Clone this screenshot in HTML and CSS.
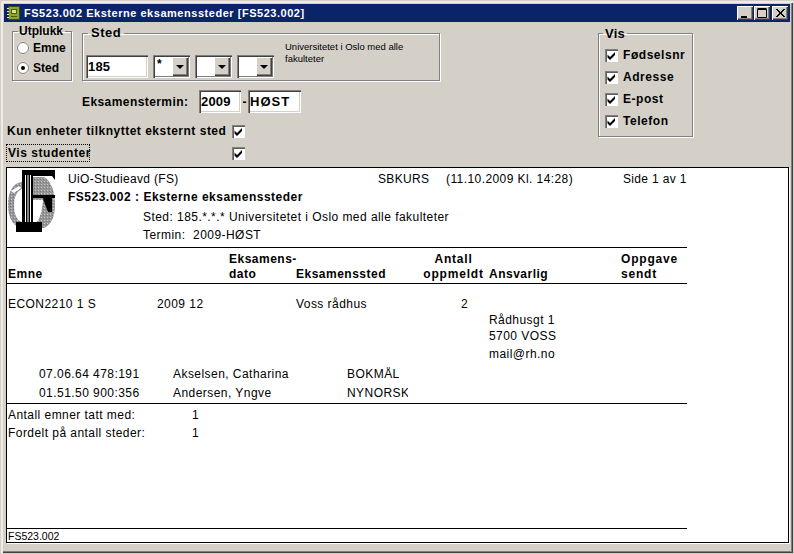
FILE: index.html
```html
<!DOCTYPE html>
<html lang="no">
<head>
<meta charset="utf-8">
<title>FS523.002</title>
<link rel="stylesheet" href="styles.css">
</head>
<body>
<div class="window">
  <header class="titlebar">
    <svg class="appicon" width="13" height="14" viewBox="0 0 13 14">
      <rect x="1.5" y="0.5" width="11" height="13" fill="#8aa530" stroke="#3c4a10"/>
      <rect x="4.5" y="3.5" width="5" height="4" fill="#dfe27a" stroke="#4c5a18"/>
      <path d="M4 10.5h6" stroke="#4c5a18"/>
      <path d="M0 2.5h2M0 5.5h2M0 8.5h2M0 11.5h2" stroke="#e8e8d8"/>
    </svg>
    <span class="titletext">FS523.002 Eksterne eksamenssteder [FS523.002]</span>
    <div class="wincontrols">
      <span class="winbtn"><svg width="14" height="12" viewBox="0 0 14 12"><path d="M3 10h6" stroke="#000" stroke-width="2"/></svg></span>
      <span class="winbtn"><svg width="14" height="12" viewBox="0 0 14 12"><path d="M2.5 2.5h9v8h-9z M2.5 1.5h9" fill="none" stroke="#000"/></svg></span>
      <span class="winbtn close"><svg width="14" height="12" viewBox="0 0 14 12"><path d="M3 2l8 8M4 2l8 8M11 2l-8 8M12 2l-8 8" stroke="#000" fill="none"/></svg></span>
    </div>
  </header>

  <section class="form">
    <div class="form-left">
      <div class="groups">
        <fieldset class="group utplukk">
          <legend>Utplukk</legend>
          <label class="radio-row"><span class="radio"></span>Emne</label>
          <label class="radio-row"><span class="radio on"></span>Sted</label>
        </fieldset>
        <fieldset class="group sted">
          <legend>Sted</legend>
          <div class="sted-row">
            <span class="input w62">185</span>
            <span class="combo"><span class="combo-val">*</span><span class="arrow"></span></span>
            <span class="combo"><span class="combo-val"></span><span class="arrow"></span></span>
            <span class="combo"><span class="combo-val"></span><span class="arrow"></span></span>
            <span class="sted-name">Universitetet i Oslo med alle fakulteter</span>
          </div>
        </fieldset>
      </div>
      <div class="termin">
        <span class="termin-label">Eksamenstermin:</span>
        <span class="input w42">2009</span>
        <span class="dash">-</span>
        <span class="input w53">HØST</span>
      </div>
      <div class="opt-row first">
        <span class="opt-label">Kun enheter tilknyttet eksternt sted</span>
        <span class="check flat"><svg width="11" height="11" viewBox="0 0 11 11"><use href="#tick"/></svg></span>
      </div>
      <div class="opt-row">
        <span class="opt-label focus">Vis studenter</span>
        <span class="check flat"><svg width="11" height="11" viewBox="0 0 11 11"><use href="#tick"/></svg></span>
      </div>
    </div>
    <fieldset class="group vis">
      <legend>Vis</legend>
      <label class="vis-row"><span class="check"><svg width="11" height="11" viewBox="0 0 11 11"><use href="#tick"/></svg></span>Fødselsnr</label>
      <label class="vis-row"><span class="check"><svg width="11" height="11" viewBox="0 0 11 11"><use href="#tick"/></svg></span>Adresse</label>
      <label class="vis-row"><span class="check"><svg width="11" height="11" viewBox="0 0 11 11"><use href="#tick"/></svg></span>E-post</label>
      <label class="vis-row"><span class="check"><svg width="11" height="11" viewBox="0 0 11 11"><use href="#tick"/></svg></span>Telefon</label>
    </fieldset>
  </section>

  <main class="report">
    <div class="page-head">
      <svg class="logo" width="50" height="64" viewBox="0 0 50 64">
        <defs>
          <pattern id="dots" width="3" height="3" patternUnits="userSpaceOnUse">
            <rect width="3" height="3" fill="#969696"/>
            <rect width="1" height="1" fill="#c8c8c8"/>
            <rect x="2" y="1" width="1" height="1" fill="#767676"/>
          </pattern>
        </defs>
        <path d="M14 13C4 14 0 24 0 36c0 12 5 22 14 23v-6C9 52 6 45 6 36c0-8 3-14 8-16z" fill="url(#dots)"/>
        <path d="M25 8H36C43 12 47 22 47 36 47 48 43 56 36 59H25V56C30 54 34 46 35 31H25z" fill="url(#dots)"/>
        <path d="M3 22l8-5 2 2-7 5z" fill="#fff"/>
        <path d="M14 1H47V11L44 7H25V53H34V63H8V53H14z" fill="#000"/>
        <path d="M17 6h1v47h-1zM19.5 6h1v47h-1zM22 6h1v47h-1z" fill="#fff"/>
        <path d="M25 26H47V29H44V43H40C38 38 36 33 35 29H25z" fill="#000"/>
      </svg>
      <div class="head-text">
        <div class="head-line1">
          <span class="org">UiO-Studieavd (FS)</span>
          <span class="prog">SBKURS</span>
          <span class="stamp">(11.10.2009 Kl. 14:28)</span>
          <span class="pageno">Side 1 av 1</span>
        </div>
        <div class="report-title">FS523.002 : Eksterne eksamenssteder</div>
        <div class="param first">Sted: 185.*.*.* Universitetet i Oslo med alle fakulteter</div>
        <div class="param">Termin:&nbsp; 2009-HØST</div>
      </div>
    </div>

    <div class="col-head">
      <div class="ch ch-emne">Emne</div>
      <div class="ch ch-dato">Eksamens-<br>dato</div>
      <div class="ch ch-sted">Eksamenssted</div>
      <div class="ch ch-antall">Antall<br>oppmeldt</div>
      <div class="ch ch-ansv">Ansvarlig</div>
      <div class="ch ch-oppg">Oppgave<br>sendt</div>
    </div>

    <div class="entry">
      <span>ECON2210 1 S</span>
      <span>2009 12</span>
      <span>Voss rådhus</span>
      <span class="count">2</span>
      <div class="address">
        <div>Rådhusgt 1</div>
        <div class="gap-a">5700 VOSS</div>
        <div class="gap-b">mail@rh.no</div>
      </div>
    </div>

    <div class="students">
      <div class="student"><span>07.06.64 478:191</span><span>Akselsen, Catharina</span><span class="lang">BOKMÅL</span></div>
      <div class="student"><span>01.51.50 900:356</span><span>Andersen, Yngve</span><span class="lang">NYNORSK</span></div>
    </div>

    <div class="totals">
      <div class="total"><span>Antall emner tatt med:</span><span>1</span></div>
      <div class="total"><span>Fordelt på antall steder:</span><span>1</span></div>
    </div>

    <footer class="page-foot">FS523.002</footer>
  </main>
</div>
<svg class="defs" width="0" height="0">
  <symbol id="tick" viewBox="0 0 11 11">
    <path d="M1.5 4.5l2.5 2.5 5-5v3l-5 5-2.5-2.5z" fill="#000"/>
  </symbol>
</svg>
</body>
</html>
```

FILE: styles.css
```css
* { box-sizing: border-box; }
html, body { margin: 0; padding: 0; }
body {
  width: 794px; height: 554px; overflow: hidden;
  font-family: "Liberation Sans", Arial, sans-serif;
  background: #d4d0c8; color: #000;
}
.defs { position: absolute; }
.window {
  width: 794px; height: 554px; display: flex; flex-direction: column;
  padding: 4px 4px 11px;
  background: #d4d0c8;
  box-shadow: inset 0 0 0 1px #d4d0c8, inset 2px 2px 0 1px #eeece6, inset -1px -1px 0 1px #404040, inset -2px -2px 0 1px #808080;
}
.titlebar {
  height: 18px; flex: none; background: #0a246a; color: #fff;
  display: flex; align-items: center; padding: 0 2px 0 3px;
}
.appicon { flex: none; margin-right: 4px; }
.titletext { font-weight: bold; font-size: 11px; letter-spacing: 0.53px; white-space: nowrap; }
.wincontrols { margin-left: auto; display: flex; gap: 0; }
.winbtn {
  width: 16px; height: 14px; margin-left: 1px; background: #d4d0c8; display: flex; justify-content: center; align-items: center;
  box-shadow: inset 1px 1px 0 #fff, inset -1px -1px 0 #404040, inset -2px -2px 0 #808080;
}
.winbtn.close { margin-left: 2px; }

.form {
  height: 145px; flex: none; display: flex; justify-content: space-between;
  padding: 0 97px 0 3px;
  font-weight: bold; font-size: 12px;
}
.form-left { width: 440px; display: flex; flex-direction: column; }
.groups { display: flex; gap: 10px; padding-left: 5px; margin-top: 3px; height: 60px; align-items: flex-start; }
.group {
  margin: 0; border: 1px solid #808080; box-shadow: 1px 1px 0 #fff, inset 1px 1px 0 #fff;
  min-width: 0;
}
.group legend { padding: 0 1px; font-size: 13px; line-height: 15px; letter-spacing: 0.2px; }
.utplukk { width: 60px; height: 56px; padding: 0 0 0 4px; margin-top: 0; }
.utplukk legend { margin-left: 1px; font-size: 12px; line-height: 13px; padding: 0 2px 0 1px; letter-spacing: 0; }
.radio-row { display: flex; align-items: center; height: 20px; }
.radio {
  width: 12px; height: 12px; border-radius: 50%; background: #fff; margin-right: 4px; flex: none;
  border: 1px solid #808080; box-shadow: 0 0 0 0.5px #e8e6e0; position: relative; display: flex; justify-content: center; align-items: center;
}
.radio.on::after { content: ""; width: 4px; height: 4px; background: #000; border-radius: 50%; }
.sted { width: 358px; height: 54px; padding: 0 0 0 3px; margin-top: 2px; }
.sted legend { margin-left: 2px; padding: 0 3px; font-size: 13px; line-height: 12px; letter-spacing: 0.5px; }
.sted-row { display: flex; align-items: flex-start; margin-top: 16px; }
.input {
  display: block; height: 23px; background: #fff; font-size: 13px; line-height: 21px; padding-left: 2px; flex: none;
  box-shadow: inset 1px 1px 0 #808080, inset 2px 2px 0 #404040, inset -1px -1px 0 #fff, inset -2px -2px 0 #d4d0c8;
  font-weight: bold; padding-top: 1px; letter-spacing: 0.2px;
}
.w62 { width: 62px; }
.w42 { width: 42px; }
.w53 { width: 53px; letter-spacing: 1px; }
.combo {
  width: 37px; height: 23px; margin-left: 5px; flex: none; display: flex; background: #fff; padding: 2px 2px 2px 2px;
  box-shadow: inset 1px 1px 0 #808080, inset 2px 2px 0 #404040, inset -1px -1px 0 #fff, inset -2px -2px 0 #808080;
}
.combo-val { flex: 1; font-size: 12px; line-height: 14px; padding-left: 2px; }
.arrow {
  width: 16px; background: #d4d0c8; display: flex; justify-content: center; align-items: center;
  box-shadow: inset 1px 1px 0 #fff, inset -1px -1px 0 #404040, inset -2px -2px 0 #808080;
}
.arrow::after { content: ""; width: 0; height: 0; border: 4px solid transparent; border-top-color: #000; border-bottom: 0; }
.sted-name { font-weight: normal; font-size: 9.5px; line-height: 12px; margin: -14px 0 0 11px; width: 150px; }
.termin { display: flex; align-items: center; padding-left: 75px; margin-top: 5px; height: 23px; }
.termin-label { width: 117px; font-size: 12px; letter-spacing: 0.42px; }
.dash { width: 7px; text-align: center; }
.opt-row { display: flex; align-items: center; height: 18px; margin-top: 4px; letter-spacing: 0.5px; white-space: nowrap; }
.opt-row.first { margin-top: 9px; }
.opt-label { width: 225px; flex: none; }
.opt-label.focus { width: 84px; margin-left: -1px; margin-right: 142px; padding-left: 2px; outline: 1px dotted #000; outline-offset: -1px; height: 18px; line-height: 18px; letter-spacing: 0.55px; }
.check {
  width: 13px; height: 13px; flex: none; background: #fff; display: flex; justify-content: center; align-items: center;
  box-shadow: inset 1px 1px 0 #808080, inset 2px 2px 0 #606060, inset -1px -1px 0 #fff;
}
.vis { width: 95px; height: 110px; margin-top: 5px; padding: 4px 0 0 6px; }
.vis legend { margin-left: -2px; padding: 0 2px; font-size: 13px; line-height: 13px; }
.vis-row { display: flex; align-items: center; height: 22px; gap: 5px; letter-spacing: 0.55px; }

.report {
  flex: 1; margin: 0 1px 0 2px; background: #fff; border: 1px solid #000;
  box-shadow: 1px 1px 0 #fff; display: flex; flex-direction: column;
  font-size: 12px; position: relative; letter-spacing: 0.45px;
}
.page-head { display: flex; height: 79px; flex: none; width: 680px; padding-left: 1px; }
.logo { flex: none; margin-top: 1px; }
.head-text { padding-left: 10px; flex: 1; font-size: 12px; }
.head-line1 { display: grid; grid-template-columns: 310px 69px 176px auto; padding-top: 4px; line-height: 15px; letter-spacing: 0.33px; white-space: nowrap; }
.stamp { margin-left: -1px; letter-spacing: 0.42px; }
.report-title { font-weight: bold; line-height: 15px; margin-top: 3px; letter-spacing: 0.5px; }
.param { padding-left: 75px; line-height: 15px; }
.param.first { margin-top: 5px; }
.param:last-child { margin-top: 3px; }

.col-head {
  width: 680px; height: 37px; flex: none; border-top: 1px solid #000; border-bottom: 1px solid #000;
  display: grid; grid-template-columns: 221px 67px 107px 86px 132px auto; font-weight: bold; line-height: 15px;
  padding-left: 1px; letter-spacing: 0.5px; align-items: end; padding-bottom: 1px; white-space: nowrap;
}
.ch-antall { text-align: center; padding-left: 15px; letter-spacing: 0.8px; }
.ch-oppg { letter-spacing: 0.8px; }
.entry {
  width: 680px; display: grid; grid-template-columns: 149px 139px 165px 28px auto; padding-left: 1px; line-height: 15px; padding-top: 13px; height: 83px; flex: none;
}
.count { text-align: left; }
.address { padding-top: 16px; }
.gap-a { margin-top: 1px; }
.gap-b { margin-top: 3px; }
.students { width: 680px; height: 36px; flex: none; }
.student { display: grid; grid-template-columns: 134px 174px 61px; padding-left: 32px; line-height: 15px; height: 19px; white-space: nowrap; }
.lang { overflow: hidden; white-space: nowrap; }
.totals { width: 680px; border-top: 1px solid #000; padding: 4px 0 0 1px; flex: none; }
.total { display: grid; grid-template-columns: 184px auto; line-height: 15px; height: 18px; }
.page-foot {
  margin-top: auto; width: 680px; border-top: 1px solid #000; height: 14px; padding-left: 1px; font-size: 10.5px; line-height: 14px; letter-spacing: 0;
}
```
